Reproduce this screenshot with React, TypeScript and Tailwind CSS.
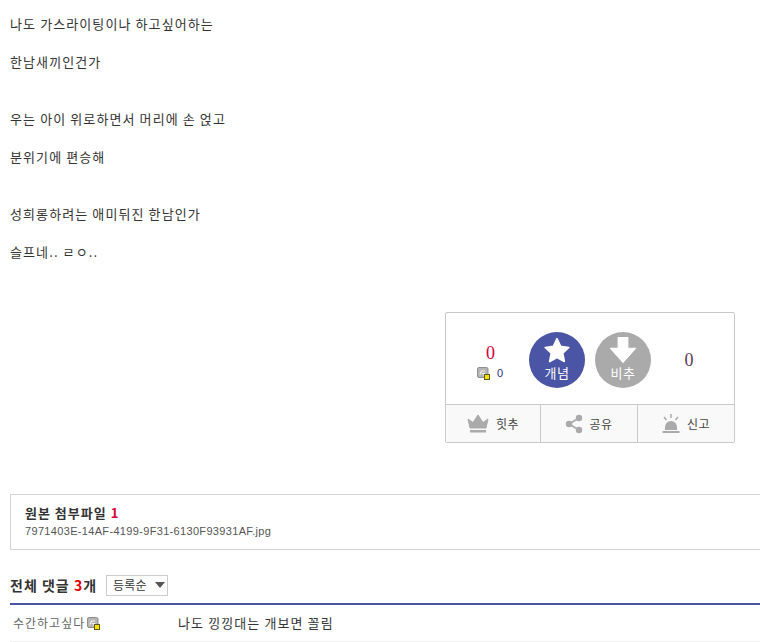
const kr = "font-['Noto_Sans_CJK_KR','Liberation_Sans',sans-serif]";

function LevelIcon({ className = "" }: { className?: string }) {
  return (
    <svg viewBox="0 0 13 13" width="13" height="13" className={className}>
      <rect x="0.5" y="0.5" width="10.5" height="10" rx="1.5" fill="#b5b5b5" stroke="#8f8f8f" />
      <path d="M3 7.5 4.5 4H8M5 6.5H7.5L6.5 8.5" fill="none" stroke="#f4f4f4" strokeWidth="1.2" />
      <rect x="7.5" y="7.5" width="5" height="5" fill="#ffe100" stroke="#5a5a20" />
    </svg>
  );
}

function Paragraph({ children }: { children: string }) {
  return <p className="h-[19px] leading-[19px] mb-[19px]">{children}</p>;
}

function VoteBox() {
  return (
    <div className="w-[290px] h-[131px] ml-auto mr-[65px] border border-[#c9c9c9] rounded-[2px] flex flex-col">
      <div className="h-[91px] flex items-start">
        <div className="w-[83px] pl-[6px] pt-[30px] flex flex-col items-center">
          <span className="font-['Liberation_Serif',serif] text-[18px] leading-[20px] tracking-normal text-[#d4003a]">0</span>
          <span className="flex items-center gap-[7px] mt-[1px] h-[18px]">
            <LevelIcon />
            <span className="font-['Liberation_Sans',sans-serif] text-[11px] text-[#2b2b7a]">0</span>
          </span>
        </div>
        <div className="mt-[19px] w-[56px] h-[56px] rounded-full bg-[#4a55a5] flex flex-col items-center text-white">
          <svg viewBox="0 0 24 24" width="28" height="27" className="mt-[5px]">
            <path
              d="M12 1.5l3.2 6.9 7.3.9-5.4 5.1 1.4 7.4L12 18.2l-6.500 3.600 1.400-7.400L1.500 9.300l7.300-.9z"
              fill="#fff"
              stroke="#fff"
              strokeWidth="1.500"
              strokeLinejoin="round"
            />
          </svg>
          <span className="text-[13px] leading-[14px] mt-[2px] tracking-[0.5px]">개념</span>
        </div>
        <div className="ml-[10px] mt-[19px] w-[56px] h-[56px] rounded-full bg-[#aaaaaa] flex flex-col items-center text-white">
          <svg viewBox="0 0 24 24" width="26" height="26" className="mt-[5px]">
            <path d="M7.500 0.500h9v10H23.500L12 23.500 0.500 10.500h7z" fill="#fff" stroke="#fff" strokeLinejoin="round" />
          </svg>
          <span className="text-[13px] leading-[14px] mt-[3px] tracking-[0.5px]">비추</span>
        </div>
        <div className="w-[76px] pt-[37px] text-center font-['Liberation_Serif',serif] text-[18px] leading-[20px] tracking-normal text-[#5a3a5a]">
          0
        </div>
      </div>
      <div className="flex-1 flex border-t border-[#c9c9c9] bg-[#f9f9f9] text-[12px] tracking-[0.5px] text-[#444]">
        <div className="w-[94px] flex items-center justify-center gap-[7px]">
          <svg viewBox="0 0 22 20" width="22" height="20">
            <path d="M1 5l5 3.500L11 1l5 7.500L21 5l-2 9H3z" fill="#aaa" stroke="#aaa" strokeLinejoin="round" />
            <rect x="3" y="16" width="16" height="2.500" fill="#aaa" />
          </svg>
          <span>힛추</span>
        </div>
        <div className="w-[97px] border-l border-[#c9c9c9] flex items-center justify-center gap-[6px]">
          <svg viewBox="0 0 18 20" width="18" height="20">
            <path d="M14 4 4 10l10 6" fill="none" stroke="#aaa" strokeWidth="1.800" />
            <circle cx="14" cy="4" r="3.200" fill="#aaa" />
            <circle cx="4" cy="10" r="3.200" fill="#aaa" />
            <circle cx="14" cy="16" r="3.200" fill="#aaa" />
          </svg>
          <span>공유</span>
        </div>
        <div className="flex-1 border-l border-[#c9c9c9] flex items-center justify-center gap-[7px]">
          <svg viewBox="0 0 18 20" width="18" height="20">
            <path d="M3 16v-3a6 6 0 0 1 12 0v3z" fill="#aaa" />
            <rect x="0.500" y="17" width="17" height="2" fill="#aaa" />
            <path d="M9 0v4M2 3l2.500 3M16 3l-2.500 3" stroke="#aaa" strokeWidth="1.500" fill="none" />
          </svg>
          <span>신고</span>
        </div>
      </div>
    </div>
  );
}

export default function App() {
  return (
    <div className="w-[760px] h-[642px] overflow-hidden bg-white">
      <div className={`${kr} w-[800px] pl-[10px] text-[13px] tracking-[1.1px] text-[#333]`}>
        <div className="pt-[14px] w-[750px]">
          <Paragraph>나도 가스라이팅이나 하고싶어하는</Paragraph>
          <p className="h-[19px] leading-[19px] mb-[38px]">한남새끼인건가</p>
          <Paragraph>우는 아이 위로하면서 머리에 손 얹고</Paragraph>
          <p className="h-[19px] leading-[19px] mb-[38px]">분위기에 편승해</p>
          <Paragraph>성희롱하려는 애미뒤진 한남인가</Paragraph>
          <p className="h-[19px] leading-[19px]">슬프네.. ㄹㅇ..</p>
        </div>

        <div className="mt-[51px]">
          <VoteBox />
        </div>

        <div className="mt-[51px] h-[56px] border border-[#d5d5d5] pl-[14px] pt-[9px]">
          <div className="text-[13px] leading-[18px] font-bold tracking-[1px] text-[#333]">
            원본 첨부파일 <span className="text-[#d4003a]">1</span>
          </div>
          <div className="font-['Liberation_Sans',sans-serif] text-[11px] leading-[15px] mt-[2px] tracking-[0.33px] text-[#555]">
            7971403E-14AF-4199-9F31-6130F93931AF.jpg
          </div>
        </div>

        <div className="mt-[24px] h-[22px] flex items-center">
          <span className="font-bold text-[14px] tracking-[1px] text-[#333]">
            전체 댓글 <span className="text-[#e00000]">3</span>개
          </span>
          <span className="ml-[9px] w-[62px] h-[21px] border border-[#ccc] flex items-center pl-[6px] gap-[8px] text-[12px] tracking-[0.2px] text-[#333]">
            등록순
            <span className="w-0 h-0 border-x-[5px] border-x-transparent border-t-[6px] border-t-[#555]" />
          </span>
        </div>

        <div className="mt-[7px] h-[39px] border-t-2 border-[#4a55a5] border-b border-b-[#eee] flex items-center">
          <span className="w-[168px] flex items-center gap-[2px] pl-[3px] text-[12px] tracking-[1px] text-[#666]">
            수간하고싶다
            <LevelIcon />
          </span>
          <span className="text-[13px]">나도 낑낑대는 개보면 꼴림</span>
        </div>
      </div>
    </div>
  );
}
